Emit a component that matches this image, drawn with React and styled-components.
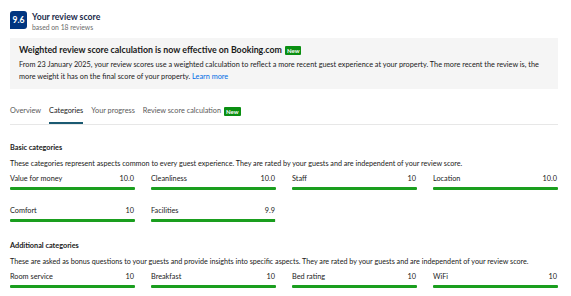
import React from "react";
import styled, { createGlobalStyle } from "styled-components";

const Global = createGlobalStyle`
  html, body { margin: 0; padding: 0; background: #fff; }
  body { font-family: Lato, "Noto Sans", sans-serif; color: #1a1a1a; }
`;

const Page = styled.div`
  width: 548px;
  padding: 11px 10px 0 10px;
`;

const Header = styled.div`
  display: flex;
  align-items: flex-start;
  gap: 5px;
`;

const ScoreBadge = styled.div`
  width: 17px;
  height: 18px;
  border-radius: 3px 3px 3px 0;
  background: #003580;
  color: #fff;
  font-weight: 700;
  font-size: 8.5px;
  display: flex;
  align-items: center;
  justify-content: center;
`;

const HeaderText = styled.div`
  display: flex;
  flex-direction: column;
`;

const HeaderTitle = styled.div`
  font-size: 8.7px;
  font-weight: 700;
  color: #1a2a4a;
  line-height: 12px;
`;

const HeaderSub = styled.div`
  font-size: 6.8px;
  color: #6b6b6b;
  line-height: 8px;
`;

const Banner = styled.div`
  margin-top: 7px;
  background: #f5f5f5;
  padding: 5px 9px 6px 9px;
`;

const BannerTitle = styled.div`
  font-size: 8.8px;
  font-weight: 700;
  line-height: 14px;
  display: flex;
  align-items: center;
  gap: 3px;
`;

const NewTag = styled.span`
  display: inline-block;
  background: #0a8f12;
  color: #fff;
  font-size: 6px;
  font-weight: 700;
  line-height: 9px;
  padding: 0 2px;
  border-radius: 1px;
`;

const BannerBody = styled.div`
  margin-top: 2px;
  font-size: 7.3px;
  line-height: 12px;
`;

const Link = styled.a`
  color: #006ce4;
  text-decoration: none;
`;

const Tabs = styled.div`
  margin-top: 16px;
  display: flex;
  gap: 8px;
  border-bottom: 1px solid #e7e7e7;
`;

const Tab = styled.div`
  font-size: 7.3px;
  line-height: 12px;
  padding-bottom: 5px;
  color: ${(p) => (p.$active ? "#1a1a1a" : "#595959")};
  border-bottom: 2px solid ${(p) => (p.$active ? "#1b5a72" : "transparent")};
  display: flex;
  align-items: center;
  gap: 3px;
`;

const Section = styled.div`
  margin-top: ${(p) => p.$top}px;
`;

const SectionTitle = styled.div`
  font-size: 7.3px;
  font-weight: 700;
  line-height: 12px;
`;

const SectionDesc = styled.div`
  margin-top: 4px;
  font-size: 7.2px;
  line-height: 12px;
`;

const Grid = styled.div`
  margin-top: 3px;
  display: grid;
  grid-template-columns: repeat(4, 125px);
  column-gap: 16px;
  row-gap: 15px;
`;

const Item = styled.div`
  display: flex;
  flex-direction: column;
`;

const ItemHead = styled.div`
  display: flex;
  justify-content: space-between;
  font-size: 7.3px;
  line-height: 11px;
  padding-right: 1px;
`;

const Bar = styled.div`
  margin-top: 3px;
  height: 3px;
  background: #e7e7e7;
  border-radius: 1px;
  overflow: hidden;
`;

const Fill = styled.div`
  height: 100%;
  background: #1a9e1e;
`;

const basic = [
  ["Value for money", "10.0", 10],
  ["Cleanliness", "10.0", 10],
  ["Staff", "10", 10],
  ["Location", "10.0", 10],
  ["Comfort", "10", 10],
  ["Facilities", "9.9", 9.9],
];

const additional = [
  ["Room service", "10", 10],
  ["Breakfast", "10", 10],
  ["Bed rating", "10", 10],
  ["WiFi", "10", 10],
];

function Cat({ name, value, pct }) {
  return (
    <Item>
      <ItemHead>
        <span>{name}</span>
        <span>{value}</span>
      </ItemHead>
      <Bar>
        <Fill style={{ width: `${pct * 10}%` }} />
      </Bar>
    </Item>
  );
}

export default function App() {
  return (
    <>
      <Global />
      <Page>
        <Header>
          <ScoreBadge>9.6</ScoreBadge>
          <HeaderText>
            <HeaderTitle>Your review score</HeaderTitle>
            <HeaderSub>based on 18 reviews</HeaderSub>
          </HeaderText>
        </Header>
        <Banner>
          <BannerTitle>
            Weighted review score calculation is now effective on Booking.com
            <NewTag>New</NewTag>
          </BannerTitle>
          <BannerBody>
            From 23 January 2025, your review scores use a weighted calculation to reflect a more
            recent guest experience at your property. The more recent the review is, the more weight
            it has on the final score of your property. <Link>Learn more</Link>
          </BannerBody>
        </Banner>
        <Tabs>
          <Tab>Overview</Tab>
          <Tab $active>Categories</Tab>
          <Tab>Your progress</Tab>
          <Tab>
            Review score calculation <NewTag>New</NewTag>
          </Tab>
        </Tabs>
        <Section $top={17}>
          <SectionTitle>Basic categories</SectionTitle>
          <SectionDesc>
            These categories represent aspects common to every guest experience. They are rated by
            your guests and are independent of your review score.
          </SectionDesc>
          <Grid>
            {basic.map(([n, v, p]) => (
              <Cat key={n} name={n} value={v} pct={p} />
            ))}
          </Grid>
        </Section>
        <Section $top={18}>
          <SectionTitle>Additional categories</SectionTitle>
          <SectionDesc>
            These are asked as bonus questions to your guests and provide insights into specific
            aspects. They are rated by your guests and are independent of your review score.
          </SectionDesc>
          <Grid>
            {additional.map(([n, v, p]) => (
              <Cat key={n} name={n} value={v} pct={p} />
            ))}
          </Grid>
        </Section>
      </Page>
    </>
  );
}
